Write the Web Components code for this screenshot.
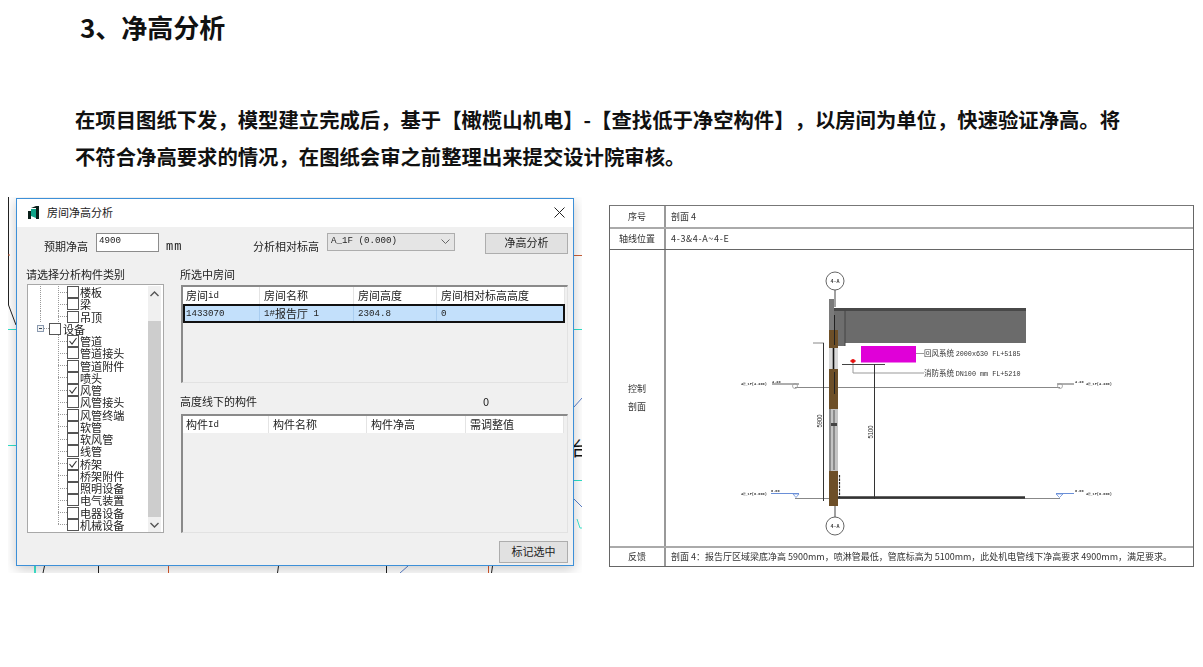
<!DOCTYPE html>
<html lang="zh">
<head>
<meta charset="utf-8">
<title>净高分析</title>
<style>
  html, body { margin: 0; background: #fff; }
  body { font-family: "Noto Sans CJK SC", "Liberation Sans", sans-serif; overflow: hidden; }
  /* half-em latin of the old dialog font, mixed in with 11px CJK */
  .m { font-family: "Liberation Mono", monospace; font-size: 9.17px; white-space: pre; }
</style>
</head>
<body>

<report-page>
  <span slot="heading">3、净高分析</span>
  <span slot="intro">在项目图纸下发&#xFF0C;模型建立完成后&#xFF0C;基于【橄榄山机电】-【查找低于净空构件】&#xFF0C;以房间为单位&#xFF0C;快速验证净高。将不符合净高要求的情况&#xFF0C;在图纸会审之前整理出来提交设计院审核。</span>

  <cad-backdrop slot="left">
    <win-dialog caption="房间净高分析">
      <div slot="toolbar-left">
        <win-label style="margin-top:5px">预期净高</win-label>
        <win-field value="4900"></win-field>
        <win-label style="margin:4px 0 0 -1px"><span class="m" style="font-size:12px;letter-spacing:1px">mm</span></win-label>
      </div>
      <win-label slot="toolbar-mid" style="margin-top:5px">分析相对标高</win-label>
      <win-select slot="toolbar-mid" value="A_1F (0.000)"></win-select>
      <win-button slot="toolbar-right" style="width:83px;height:21px">净高分析</win-button>

      <win-label slot="left-title">请选择分析构件类别</win-label>
      <win-tree slot="tree">
        <tree-item trunk>楼板</tree-item>
        <tree-item trunk>梁</tree-item>
        <tree-item trunk>吊顶</tree-item>
        <tree-item root>设备</tree-item>
        <tree-item checked>管道</tree-item>
        <tree-item>管道接头</tree-item>
        <tree-item>管道附件</tree-item>
        <tree-item>喷头</tree-item>
        <tree-item checked>风管</tree-item>
        <tree-item>风管接头</tree-item>
        <tree-item>风管终端</tree-item>
        <tree-item>软管</tree-item>
        <tree-item>软风管</tree-item>
        <tree-item>线管</tree-item>
        <tree-item checked>桥架</tree-item>
        <tree-item>桥架附件</tree-item>
        <tree-item>照明设备</tree-item>
        <tree-item>电气装置</tree-item>
        <tree-item>电器设备</tree-item>
        <tree-item last>机械设备</tree-item>
      </win-tree>

      <win-label slot="rooms-title">所选中房间</win-label>
      <win-grid slot="rooms" style="height:98px;--cols:77px 94px 83px 128px">
        <grid-row head><span>房间<span class="m">id</span></span><span>房间名称</span><span>房间高度</span><span>房间相对标高高度</span></grid-row>
        <grid-row selected><span class="m">1433070</span><span><span class="m">1#</span>报告厅<span class="m"> 1</span></span><span class="m">2304.8</span><span class="m">0</span></grid-row>
      </win-grid>

      <win-label slot="parts-title">高度线下的构件</win-label>
      <win-label slot="parts-count">0</win-label>
      <win-grid slot="parts" style="height:119px;--cols:86px 98px 99px 98px">
        <grid-row head><span>构件<span class="m">Id</span></span><span>构件名称</span><span>构件净高</span><span>需调整值</span></grid-row>
      </win-grid>

      <win-button slot="footer" style="width:69px;height:22px">标记选中</win-button>
    </win-dialog>
  </cad-backdrop>

  <sheet-table slot="right">
    <sheet-row label="序号" style="height:23px">剖面 4</sheet-row>
    <sheet-row label="轴线位置" style="height:21px"><span style="letter-spacing:.65px">4-3&amp;4-A~4-E</span></sheet-row>
    <sheet-row label="控制<br>剖面" style="height:298px"><section-drawing></section-drawing></sheet-row>
    <sheet-row label="反馈" style="height:18px" last>剖面 4&#xFF1A;报告厅区域梁底净高 5900mm&#xFF0C;喷淋管最低&#xFF0C;管底标高为 5100mm&#xFF0C;此处机电管线下净高要求 4900mm&#xFF0C;满足要求。</sheet-row>
  </sheet-table>
</report-page>

<script>
// every element just stamps its markup in an open shadow root
class Stamped extends HTMLElement {
  constructor() {
    super();
    this._shadow = this.attachShadow({ mode: 'open' });
    this._shadow.innerHTML = this.markup();
  }
  markup() { return '<slot></slot>'; }
}

class ReportPage extends Stamped {
  markup() {
    return `
      <style>
        :host { display: flex; flex-direction: column; width: 1203px; height: 667px; color: #111; }
        h1 { margin: 0; padding: 8px 0 0 80px; font: 700 26px/38px "Noto Sans CJK SC", sans-serif; }
        p {
          margin: 0; padding: 55px 0 0 75px; width: 1050px;
          font: 700 20.35px/37px "Noto Sans CJK SC", sans-serif;
          text-spacing-trim: space-all;
        }
        .figures { display: flex; align-items: flex-start; gap: 27px; padding: 22px 0 0 8px; }
      </style>
      <h1><slot name="heading"></slot></h1>
      <p><slot name="intro"></slot></p>
      <div class="figures"><slot name="left"></slot><slot name="right"></slot></div>
    `;
  }
}

// the CAD model that shows around the edges of the dialog
class CadBackdrop extends Stamped {
  markup() {
    return `
      <style>
        :host { display: block; position: relative; width: 574px; height: 376px; overflow: hidden; background: #fff; }
        svg { position: absolute; inset: 0; }
        .dialog { position: relative; padding: 1px 8px 7px; }
      </style>
      <svg width="574" height="376" viewBox="8 197 574 376" fill="none" stroke-width="1">
        <path d="M8.5 197V305L16 325" stroke="#222"/>
        <path d="M8 255h2" stroke="#c85a30"/>
        <path d="M8 329.5h8M8 445.5h8M574 329.5h8M574 480.5h8" stroke="#2fe0c8"/>
        <path d="M574 255.5h8" stroke="#c8603a"/>
        <path d="M574 407l8-9M574 499l8 8" stroke="#5a7fc8"/>
        <path d="M577 519l3 9h2" stroke="#40e8d0"/>
        <path d="M35 566v7" stroke="#40e8d0" stroke-width="2"/>
        <path d="M44.5 566l-1.5 7M98.5 566v7M278.5 566l-1 7M386.5 566v7M492.5 566l-1 7" stroke="#222"/>
        <path d="M168.5 566v7M488.5 566v7" stroke="#d8582c"/>
        <path d="M400 573l8-7" stroke="#5a7fc8"/>
        <text x="571" y="456" font-size="19" fill="#111" stroke="none" font-family="Noto Sans CJK SC, sans-serif">台</text>
      </svg>
      <div class="dialog"><slot></slot></div>
    `;
  }
}

class WinDialog extends Stamped {
  markup() {
    return `
      <style>
        :host {
          display: block; box-sizing: border-box; width: 558px; height: 368px;
          border: 1px solid #3d90d8; background: #f0f0f0; color: #222;
          font: 11px/17px "Noto Sans CJK SC", sans-serif;
          box-shadow: 0 3px 12px rgba(0,0,0,.22);
          filter: blur(.35px);
        }
        .titlebar { display: flex; align-items: center; box-sizing: border-box; height: 28px; padding: 0 8px 2px 11px; background: #fff; }
        .titlebar span { flex: 1; margin-left: 8px; }
        .toolbar { display: flex; align-items: flex-start; height: 21px; padding: 6px 5px 0 0; }
        ::slotted([slot="toolbar-left"]) { display: flex; align-items: flex-start; gap: 8px; margin-left: 27px; width: 209px; }
        .mid { display: flex; align-items: flex-start; gap: 8px; flex: 1; }
        .main { display: grid; grid-template-columns: 137px 387px; column-gap: 17px; padding: 12px 0 0 10px; }
        .left-title { display: block; height: 18px; margin-left: -1px; }
        .right-title { display: block; height: 19px; margin-left: -1px; }
        .parts-head { display: flex; height: 21px; padding-top: 10px; margin-left: -1px; }
        .count { margin-left: 226px; }
        .footer { display: flex; justify-content: flex-end; padding: 8px 5px 0 0; }
      </style>
      <div class="titlebar">
        <svg width="11" height="13" viewBox="0 0 11 13">
          <path d="M0 5h3v8H0zM8 0h3v13H8zM3 2l5-2v2H3z" fill="#0a1f1a"/>
          <path d="M3 3h5v9L3 10z" fill="#10a58a"/>
        </svg>
        <span></span>
        <svg width="11" height="11" viewBox="0 0 11 11"><path d="M.5.5l10 10M10.5.5l-10 10" stroke="#222" fill="none"/></svg>
      </div>
      <div class="toolbar">
        <slot name="toolbar-left"></slot>
        <div class="mid"><slot name="toolbar-mid"></slot></div>
        <slot name="toolbar-right"></slot>
      </div>
      <div class="main">
        <div>
          <div class="left-title"><slot name="left-title"></slot></div>
          <slot name="tree"></slot>
        </div>
        <div>
          <div class="right-title"><slot name="rooms-title"></slot></div>
          <slot name="rooms"></slot>
          <div class="parts-head"><slot name="parts-title"></slot><span class="count"><slot name="parts-count"></slot></span></div>
          <slot name="parts"></slot>
        </div>
      </div>
      <div class="footer"><slot name="footer"></slot></div>
    `;
  }
  connectedCallback() {
    this._shadow.querySelector('.titlebar span').textContent = this.getAttribute('caption');
  }
}

class WinLabel extends Stamped {
  markup() { return '<style>:host { display: inline-block; white-space: nowrap; }</style><slot></slot>'; }
}

class WinField extends Stamped {
  markup() {
    return `
      <style>
        :host {
          display: block; box-sizing: border-box; width: 63px; height: 19px; padding: 1px 2px;
          background: #fff; border: 1px solid #8c8c8c;
          font: 9.17px/12px "Liberation Mono", monospace;
        }
      </style><span></span>`;
  }
  connectedCallback() { this._shadow.querySelector('span').textContent = this.getAttribute('value'); }
}

class WinSelect extends Stamped {
  markup() {
    return `
      <style>
        :host {
          display: flex; justify-content: space-between; align-items: center; box-sizing: border-box;
          width: 128px; height: 18px; padding: 0 4px 2px 3px;
          background: #e5e5e5; border: 1px solid #adadad;
          font: 9.17px/12px "Liberation Mono", monospace;
        }
      </style>
      <span></span>
      <svg width="9" height="5" viewBox="0 0 9 5"><path d="M.5.5l4 4 4-4" fill="none" stroke="#666"/></svg>`;
  }
  connectedCallback() { this._shadow.querySelector('span').textContent = this.getAttribute('value'); }
}

class WinButton extends Stamped {
  markup() {
    return `
      <style>
        :host {
          display: flex; align-items: center; justify-content: center; box-sizing: border-box;
          background: #e1e1e1; border: 1px solid #adadad; padding-bottom: 2px;
        }
      </style><slot></slot>`;
  }
}

class WinTree extends Stamped {
  markup() {
    return `
      <style>
        :host {
          display: grid; grid-template-columns: 120px 13px; box-sizing: border-box;
          width: 137px; height: 249px; padding: 1px 2px 0 0;
          background: #fff; border: 1px solid #a8a8a8;
        }
        .list { display: flex; flex-direction: column; overflow: hidden; }
        .bar { display: flex; flex-direction: column; background: #f0f0f0; }
        .arrow { display: flex; align-items: center; justify-content: center; height: 16px; }
        .gap { height: 19px; }
        .thumb { flex: 1; background: #cdcdcd; }
        .arrow.down { height: 15px; }
      </style>
      <div class="list"><slot></slot></div>
      <div class="bar">
        <div class="arrow"><svg width="9" height="6" viewBox="0 0 9 6"><path d="M.5 5l4-4 4 4" fill="none" stroke="#555" stroke-width="1.4"/></svg></div>
        <div class="gap"></div>
        <div class="thumb"></div>
        <div class="arrow down"><svg width="9" height="6" viewBox="0 0 9 6"><path d="M.5 1l4 4 4-4" fill="none" stroke="#555" stroke-width="1.4"/></svg></div>
      </div>`;
  }
}

class TreeItem extends Stamped {
  markup() {
    return `
      <style>
        :host {
          display: flex; align-items: center; flex: none; height: 12.26px; padding-left: 30px;
          font-size: 11.1px; line-height: 12px; white-space: nowrap; color: #222;
        }
        :host([trunk]) {
          background: repeating-linear-gradient(#999 0 1px, transparent 1px 2px) 12px 0 / 1px 100% no-repeat;
        }
        :host([root]) { padding-left: 9px; }
        .guide {
          width: 9px; height: 100%; flex: none;
          background:
            repeating-linear-gradient(#999 0 1px, transparent 1px 2px) 0 0 / 1px 100% no-repeat,
            repeating-linear-gradient(90deg, #999 0 1px, transparent 1px 2px) 0 50% / 100% 1px no-repeat;
        }
        :host([last]) .guide {
          background:
            repeating-linear-gradient(#999 0 1px, transparent 1px 2px) 0 0 / 1px 50% no-repeat,
            repeating-linear-gradient(90deg, #999 0 1px, transparent 1px 2px) 0 50% / 100% 1px no-repeat;
        }
        .expander { display: none; }
        :host([root]) .guide { display: none; }
        :host([root]) .expander { display: block; flex: none; width: 12px; height: 9px; }
        .box { flex: none; width: 12px; height: 12px; margin-right: 1px; }
        :host([root]) .box { margin-right: 2px; }
        .tick { display: none; }
        :host([checked]) .tick { display: inline; }
      </style>
      <span class="guide"></span>
      <svg class="expander" viewBox="0 0 12 9">
        <rect x=".5" y="1.5" width="6" height="6" fill="#f4f4f4" stroke="#8a9ab0"/>
        <path d="M2 4.5h3" stroke="#345"/>
        <path d="M7 4.5h5" stroke="#999" stroke-dasharray="1 1"/>
      </svg>
      <svg class="box" viewBox="0 0 12 12">
        <rect x=".5" y=".5" width="11" height="11" fill="#fff" stroke="#555"/>
        <path class="tick" d="M2.5 6l2.5 3 4.5-6" fill="none" stroke="#333" stroke-width="1.1"/>
      </svg>
      <slot></slot>`;
  }
}

class WinGrid extends Stamped {
  markup() {
    return `
      <style>
        :host {
          display: block; box-sizing: border-box; overflow: hidden;
          border-style: solid; border-width: 2px 1px 1px 2px;
          border-color: #8a8a8a #e2e2e2 #e2e2e2 #8a8a8a;
        }
      </style><slot></slot>`;
  }
}

class GridRow extends Stamped {
  markup() {
    return `
      <style>
        :host {
          display: grid; grid-template-columns: var(--cols); width: max-content;
          line-height: 17px; white-space: nowrap;
        }
        :host([head]) { background: #fff; height: 17px; }
        :host([selected]) {
          height: 19px; line-height: 17px; background: #c3e0fb;
          outline: 2px solid #111; outline-offset: -2px;
        }
        ::slotted(span) {
          display: flex; align-items: center; box-sizing: border-box;
          padding-left: 4px; border-right: 1px solid #e4e4e4;
        }
        ::slotted(span:first-child) { padding-left: 3px; }
        :host([selected]) ::slotted(span) { border-right-color: #a9cdf0; }
      </style><slot></slot>`;
  }
}

class SheetTable extends Stamped {
  markup() {
    return `
      <style>
        :host {
          display: block; box-sizing: border-box; width: 585px; margin-top: 8px;
          border: 1px solid #666; border-top-color: #777; color: #333;
          font: 9px/12px "Noto Sans CJK SC", sans-serif;
          filter: blur(.35px);
        }
      </style><slot></slot>`;
  }
}

class SheetRow extends Stamped {
  markup() {
    return `
      <style>
        :host { display: grid; grid-template-columns: 56px 1fr; box-sizing: border-box; border-bottom: 1px solid #666; }
        :host(:first-child) { border-bottom: 2px solid #aaa; }
        :host(:nth-child(3)) { border-bottom: 2px solid #aaa; }
        :host([last]) { border-bottom: 0; }
        .label {
          display: flex; align-items: center; justify-content: center; text-align: center;
          border-right: 2px solid #999; line-height: 18px; white-space: nowrap;
        }
        .value { display: flex; align-items: center; padding-left: 5px; white-space: nowrap; min-width: 0; }
        :host(:nth-child(3)) .value { padding: 0; }
      </style>
      <div class="label"></div>
      <div class="value"><slot></slot></div>`;
  }
  connectedCallback() { this._shadow.querySelector('.label').innerHTML = this.getAttribute('label'); }
}

// section through the room, drawn in page coordinates so it can be read against the reference
class SectionDrawing extends Stamped {
  markup() {
    return `
      <style>
        :host { display: block; width: 527px; height: 296px; }
        svg { display: block; }
        text { fill: #333; stroke: none; }
        .mono { font-family: "Liberation Mono", monospace; font-size: 6.75px; }
        .cn { font-family: "Noto Sans CJK SC", sans-serif; font-size: 7.5px; }
        .tiny { font-family: "Liberation Mono", monospace; font-size: 3.6px; font-weight: 700; }
        .dim { font-family: "Liberation Sans", sans-serif; font-size: 8px; }
      </style>
      <svg width="527" height="296" viewBox="666 250 527 296" fill="none">
        <!-- level lines -->
        <path d="M795 387.5H1060M795 498.5H1060" stroke="#888"/>
        <path d="M772 384h27M1057 384h17" stroke="#333" stroke-width=".8"/>
        <path d="M771 493.5h28M1056 493.5h18" stroke="#6a8fd8"/>
        <path d="M793 494l3 3.5 3-3.5zM1056 494l3.5 3.5 3.5-3.5z" stroke="#6a8fd8" stroke-width=".8" fill="#fff"/>
        <circle cx="795" cy="386" r="2.5" stroke="#999" stroke-width=".8"/>
        <circle cx="1060" cy="386" r="2.5" stroke="#999" stroke-width=".8"/>
        <text class="tiny" x="741" y="385">4@_1F(4.200)</text>
        <text class="tiny" x="772" y="382.5">4.20</text>
        <text class="tiny" x="741" y="495">4@_1F(0.000)</text>
        <text class="tiny" x="771" y="492">0.00</text>
        <text class="tiny" x="1075" y="382.5">4.20</text>
        <text class="tiny" x="1086" y="385">4@_1F(4.200)</text>
        <text class="tiny" x="1075" y="492">0.00</text>
        <text class="tiny" x="1086" y="495">4@_1F(0.000)</text>

        <!-- axis bubbles -->
        <path d="M835 290v17M835 506v11" stroke="#444"/>
        <circle cx="835" cy="281" r="9" fill="#fff" stroke="#555" stroke-width=".9"/>
        <circle cx="835" cy="526" r="9" fill="#fff" stroke="#555" stroke-width=".9"/>
        <text class="tiny" x="835" y="282.5" text-anchor="middle" style="font-size:5px">4-A</text>
        <text class="tiny" x="835" y="527.5" text-anchor="middle" style="font-size:5px">4-A</text>

        <!-- beam -->
        <rect x="829" y="310" width="16" height="36" fill="#6e6e6e"/>
        <rect x="845" y="308" width="181" height="35" fill="#6b6b6b"/>
        <rect x="834" y="308" width="192" height="3" fill="#484848"/>
        <path d="M845 310v36" stroke="#444"/>

        <!-- wall -->
        <rect x="829" y="299" width="5" height="31" fill="#7a7a7a"/>
        <rect x="829" y="330" width="9" height="18" fill="#6d4f28"/>
        <rect x="829" y="348" width="9" height="21" fill="#d8d8d8"/>
        <rect x="829" y="369" width="9" height="40" fill="#6d4f28"/>
        <rect x="829" y="409" width="9" height="62" fill="#c4c4c4"/>
        <rect x="829" y="471" width="9" height="35" fill="#6d4f28"/>
        <path d="M833.5 348v21" stroke="#111" stroke-width="1.6"/>
        <path d="M834 410v60M830 409v62" stroke="#555"/>
        <path d="M834.5 315v30M834.5 372v22" stroke="#222"/>
        <rect x="831" y="423" width="6" height="3" fill="#444"/>
        <path d="M839.5 475v23" stroke="#222" stroke-width="1.2" stroke-dasharray="2.5 1"/>

        <!-- floor slab -->
        <path d="M838 497.5H1025" stroke="#333" stroke-width="2.4"/>

        <!-- duct and pipe -->
        <rect x="861" y="346" width="55" height="16.5" fill="#e000d8"/>
        <path d="M916 353.5h8" stroke="#999"/>
        <path d="M853 362V373H924" stroke="#999"/>
        <circle cx="853" cy="361" r="2" fill="#e81010"/>
        <path d="M850 361h6" stroke="#e81010"/>
        <path d="M842 364.5H885" stroke="#444"/>

        <!-- dimensions -->
        <path d="M813 343h11" stroke="#888"/>
        <path d="M823.5 343V501M874.5 364V499" stroke="#333"/>
        <text class="dim" transform="translate(822 421) rotate(-90)" text-anchor="middle" textLength="13" lengthAdjust="spacingAndGlyphs">5900</text>
        <text class="dim" transform="translate(873 432) rotate(-90)" text-anchor="middle" textLength="13" lengthAdjust="spacingAndGlyphs">5100</text>

        <!-- callouts -->
        <text x="924" y="356"><tspan class="cn">回风系统 </tspan><tspan class="mono">2000x630 FL+5185</tspan></text>
        <text x="924" y="376"><tspan class="cn">消防系统 </tspan><tspan class="mono">DN100 mm FL+5210</tspan></text>
      </svg>`;
  }
}

customElements.define('report-page', ReportPage);
customElements.define('cad-backdrop', CadBackdrop);
customElements.define('win-dialog', WinDialog);
customElements.define('win-label', WinLabel);
customElements.define('win-field', WinField);
customElements.define('win-select', WinSelect);
customElements.define('win-button', WinButton);
customElements.define('win-tree', WinTree);
customElements.define('tree-item', TreeItem);
customElements.define('win-grid', WinGrid);
customElements.define('grid-row', GridRow);
customElements.define('sheet-table', SheetTable);
customElements.define('sheet-row', SheetRow);
customElements.define('section-drawing', SectionDrawing);
</script>
</body>
</html>
